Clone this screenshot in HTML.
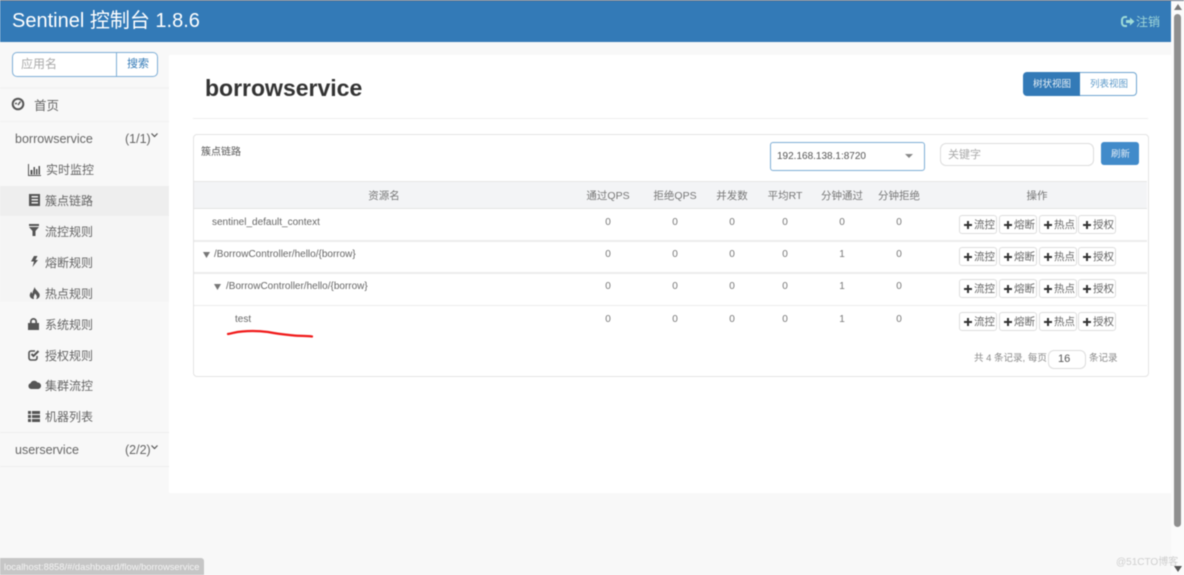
<!DOCTYPE html>
<html lang="zh"><head><meta charset="utf-8"><title>Sentinel</title>
<style>
html,body{margin:0;padding:0;width:1184px;height:575px;overflow:hidden;background:#f8f8f8}
body{position:relative;font-family:"Liberation Sans","Noto Sans CJK SC",sans-serif;color:#555;filter:blur(.45px)}
div,span,svg{position:absolute}
.t{white-space:nowrap;line-height:14px}
.c{transform:translateX(-50%)}
.m{font-size:12px;color:#666}
.h{font-size:10.5px;color:#777}
.v{font-size:10px;color:#777}
.r{font-size:10px;color:#666}
.l{left:194px;width:953px;height:1px;background:#ececec}
.b{width:36px;height:17px;border:1px solid #ddd;border-radius:3px;background:#fff;font-size:10.5px;line-height:17px;color:#666;white-space:nowrap}
.b i{position:absolute;left:4px;top:5px;width:8px;height:8px;background:linear-gradient(#333,#333) 0 3px/8px 2px no-repeat,linear-gradient(#333,#333) 3px 0/2px 8px no-repeat}
.b em{position:absolute;left:14px;top:1px;font-style:normal}
.ic{fill:#555}
</style></head><body>
<div style="left:0;top:0;width:1171px;height:42px;background:#337ab7"></div>
<div style="left:0;top:0;width:1184px;height:1px;background:#6a7484"></div>
<span class="t" style="left:12px;top:9px;font-size:20px;line-height:24px;color:#fff">Sentinel 控制台 1.8.6</span>
<svg style="left:1121px;top:15px" width="14" height="13" viewBox="0 0 14 13"><path d="M6 2H4a3 3 0 0 0-3 3v3a3 3 0 0 0 3 3h2" fill="none" stroke="#9fdcd8" stroke-width="2"/><path d="M5 5h4V2.500L13.500 6.500 9 10.500V8H5z" fill="#9fdcd8"/></svg>
<span class="t" style="left:1136px;top:15px;font-size:12px;color:#9fd6d8">注销</span>

<div style="left:1171px;top:1px;width:13px;height:574px;background:#fbfbfb"></div>
<div style="left:1174px;top:14px;width:7px;height:513px;background:#8f8f8f;border-radius:4px"></div>
<svg style="left:1174px;top:4px" width="8" height="6"><path d="M4 0L8 6H0z" fill="#7a7a7a"/></svg>
<svg style="left:1174px;top:566px" width="8" height="6"><path d="M0 0H8L4 6z" fill="#555"/></svg>

<div style="left:0;top:186px;width:169px;height:30px;background:#eee"></div>
<div style="left:0;top:216px;width:169px;height:86px;background:#f5f5f5"></div>
<div style="left:0;top:87px;width:169px;height:2px;background:#f3f3f3"></div>
<div style="left:0;top:121px;width:169px;height:1px;background:#f1f1f1"></div>
<div style="left:0;top:432px;width:169px;height:1px;background:#eee"></div>
<div style="left:0;top:466px;width:169px;height:1px;background:#eee"></div>

<div style="left:12px;top:52px;width:104px;height:23px;background:#fff;border:1px solid #7eaed6;border-radius:5px 0 0 5px"></div>
<span class="t" style="left:21px;top:57px;font-size:12px;color:#aaa">应用名</span>
<div style="left:116px;top:52px;width:40px;height:23px;background:#fff;border:1px solid #7eaed6;border-radius:0 5px 5px 0"></div>
<span class="t" style="left:127px;top:57px;font-size:11px;color:#337ab7">搜索</span>

<svg style="left:11px;top:97px" width="14" height="14" viewBox="0 0 14 14"><circle cx="7" cy="7" r="5.300" fill="none" stroke="#555" stroke-width="2"/><path d="M4 6.500h2M7 8L9.500 4.500" stroke="#555" stroke-width="1.500"/></svg>
<span class="t" style="left:34px;top:99px;font-size:12.500px;color:#666">首页</span>
<span class="t" style="left:15px;top:132px;font-size:12.500px;color:#666">borrowservice</span>
<span class="t" style="left:125px;top:132px;font-size:12.500px;color:#666">(1/1)</span>
<svg style="left:151px;top:133px" width="7" height="5"><path d="M.5.500L3.500 3.500 6.500.500" fill="none" stroke="#555" stroke-width="1.200"/></svg>

<svg style="left:28px;top:164px" width="13" height="12" viewBox="0 0 13 12"><path class="ic" d="M0 0h1v11h12v1H0zM2.500 6h2v4.500h-2zM5.500 3h1.500v7.500H5.500zM8 5h1.500v5.500H8zM10.500 2H12v8.500h-1.500z"/></svg>
<span class="t m" style="left:46px;top:163px">实时监控</span>
<svg style="left:29px;top:194px" width="11" height="12" viewBox="0 0 11 12"><path class="ic" fill-rule="evenodd" d="M0 0h11v12H0zM2.500 2v1.500h6.500V2zM2.500 5v1.500h6.500V5zM2.500 8v1.500h6.500V8z"/></svg>
<span class="t m" style="left:45px;top:194px">簇点链路</span>
<svg style="left:29px;top:224px" width="10" height="12" viewBox="0 0 10 12"><path class="ic" d="M0 0h10v2H0zM0 3h10L6.500 7v5h-3V7z"/></svg>
<span class="t m" style="left:45px;top:225px">流控规则</span>
<svg style="left:31px;top:256px" width="7" height="11" viewBox="0 0 7 11"><path class="ic" d="M3 0h3.500L4.500 4H7L1.500 11 3 5.500H0z"/></svg>
<span class="t m" style="left:45px;top:256px">熔断规则</span>
<svg style="left:29px;top:287px" width="11" height="12" viewBox="0 0 11 12"><path class="ic" d="M5.500 0C6.500 3 9 4 10.500 7c.800 2.500-1 5-3.500 5 1.500-1.500 1-3.500-1-5.500C5.500 8.500 4 9.500 5 12 2 12 0 9.500 1 7c.300-1 1-1.800 1.500-2.500 0 1 .3 1.700 1 2C3.500 4 5 2.500 5.500 0z"/></svg>
<span class="t m" style="left:45px;top:287px">热点规则</span>
<svg style="left:28px;top:318px" width="11" height="12" viewBox="0 0 11 12"><path class="ic" fill-rule="evenodd" d="M2 5V3.500a3.500 3.500 0 0 1 7 0V5h2v7H0V5zM3.700 5h3.600V3.500a1.800 1.800 0 0 0-3.600 0z"/></svg>
<span class="t m" style="left:45px;top:318px">系统规则</span>
<svg style="left:28px;top:349px" width="12" height="12" viewBox="0 0 12 12"><path d="M9 7v2a2 2 0 0 1-2 2H3a2 2 0 0 1-2-2V4a2 2 0 0 1 2-2h4" fill="none" stroke="#555" stroke-width="1.600"/><path d="M3.500 5L5.500 7 10.500 2" fill="none" stroke="#555" stroke-width="2"/></svg>
<span class="t m" style="left:45px;top:349px">授权规则</span>
<svg style="left:28px;top:380px" width="13" height="9" viewBox="0 0 13 9"><path class="ic" d="M3 9a3 3 0 0 1-.5-5.800A4 4 0 0 1 9.500 2.500 3.300 3.300 0 0 1 10.500 9z"/></svg>
<span class="t m" style="left:45px;top:379px">集群流控</span>
<svg style="left:28px;top:411px" width="12" height="11" viewBox="0 0 12 11"><path class="ic" d="M0 0h3v3H0zM4 0h8v3H4zM0 4h3v3H0zM4 4h8v3H4zM0 8h3v3H0zM4 8h8v3H4z"/></svg>
<span class="t m" style="left:45px;top:410px">机器列表</span>
<span class="t" style="left:15px;top:443px;font-size:12.500px;color:#666">userservice</span>
<span class="t" style="left:125px;top:443px;font-size:12.500px;color:#666">(2/2)</span>
<svg style="left:151px;top:445px" width="7" height="5"><path d="M.5.500L3.500 3.500 6.500.500" fill="none" stroke="#555" stroke-width="1.200"/></svg>

<div style="left:169px;top:55px;width:1002px;height:438px;background:#fff"></div>
<span class="t" style="left:205px;top:74px;font-size:23px;line-height:28px;font-weight:bold;color:#333">borrowservice</span>
<div style="left:193px;top:118px;width:955px;height:1px;background:#eee"></div>

<div style="left:1023px;top:72px;width:57px;height:24px;background:#337ab7;border-radius:4px 0 0 4px"></div>
<div style="left:1080px;top:72px;width:56px;height:22px;background:#fff;border:1px solid #6fa5d0;border-left:0;border-radius:0 4px 4px 0"></div>
<span class="t" style="left:1033px;top:78px;font-size:9.500px;color:#e6eff6">树状视图</span>
<span class="t" style="left:1090px;top:78px;font-size:9.500px;color:#5f9bca">列表视图</span>

<div style="left:193px;top:134px;width:954px;height:241px;border:1px solid #e3e3e3;border-radius:4px;background:#fff"></div>
<span class="t" style="left:201px;top:145px;font-size:10px;line-height:15px;color:#555">簇点链路</span>
<div style="left:770px;top:142px;width:153px;height:27px;border:1px solid #7eaed6;border-radius:3px;background:#fff"></div>
<span class="t" style="left:777px;top:150px;font-size:10px;color:#555">192.168.138.1:8720</span>
<svg style="left:905px;top:154px" width="8" height="4"><path d="M0 0H8L4 4z" fill="#888"/></svg>
<div style="left:940px;top:143px;width:152px;height:21px;border:1px solid #ddd;border-radius:6px;background:#fff"></div>
<span class="t" style="left:948px;top:148px;font-size:11px;color:#aaa">关键字</span>
<div style="left:1101px;top:142px;width:38px;height:23px;background:#428bca;border-radius:3px"></div>
<span class="t" style="left:1111px;top:148px;font-size:9.500px;color:#dfeaf4">刷新</span>

<div style="left:194px;top:181px;width:953px;background:#f3f4f6;border-top:1px solid #e6e6e6;border-bottom:1px solid #e4e4e4;box-sizing:border-box;height:28px"></div>
<span class="t h c" style="left:384px;top:189px">资源名</span>
<span class="t h c" style="left:608px;top:189px">通过QPS</span>
<span class="t h c" style="left:675px;top:189px">拒绝QPS</span>
<span class="t h c" style="left:732px;top:189px">并发数</span>
<span class="t h c" style="left:785px;top:189px">平均RT</span>
<span class="t h c" style="left:842px;top:189px">分钟通过</span>
<span class="t h c" style="left:899px;top:189px">分钟拒绝</span>
<span class="t h c" style="left:1037px;top:189px">操作</span>

<div class="l" style="top:240px;height:2px"></div>
<div class="l" style="top:272px;height:2px"></div>
<div class="l" style="top:305px"></div>

<span class="t r" style="left:212px;top:216px">sentinel_default_context</span>
<svg style="left:203px;top:252px" width="7" height="6"><path d="M0 0H7L3.500 6z" fill="#777"/></svg>
<span class="t r" style="left:214px;top:248px">/BorrowController/hello/{borrow}</span>
<svg style="left:214px;top:284px" width="7" height="6"><path d="M0 0H7L3.500 6z" fill="#777"/></svg>
<span class="t r" style="left:226px;top:280px">/BorrowController/hello/{borrow}</span>
<span class="t r" style="left:235px;top:313px">test</span>
<svg style="left:226px;top:326px" width="90" height="12"><path d="M2 8C6 7.500 9 6 16 5.500 24 4.800 34 5 42 6 52 8 58 8.500 68 9.500 74 10 80 9.800 86 10.500" fill="none" stroke="#f01a1a" stroke-width="2.200" stroke-linecap="round"/></svg>

<span class="t v c" style="left:608px;top:216px">0</span><span class="t v c" style="left:675px;top:216px">0</span><span class="t v c" style="left:732px;top:216px">0</span><span class="t v c" style="left:785px;top:216px">0</span><span class="t v c" style="left:842px;top:216px">0</span><span class="t v c" style="left:899px;top:216px">0</span>
<span class="t v c" style="left:608px;top:248px">0</span><span class="t v c" style="left:675px;top:248px">0</span><span class="t v c" style="left:732px;top:248px">0</span><span class="t v c" style="left:785px;top:248px">0</span><span class="t v c" style="left:842px;top:248px">1</span><span class="t v c" style="left:899px;top:248px">0</span>
<span class="t v c" style="left:608px;top:280px">0</span><span class="t v c" style="left:675px;top:280px">0</span><span class="t v c" style="left:732px;top:280px">0</span><span class="t v c" style="left:785px;top:280px">0</span><span class="t v c" style="left:842px;top:280px">1</span><span class="t v c" style="left:899px;top:280px">0</span>
<span class="t v c" style="left:608px;top:313px">0</span><span class="t v c" style="left:675px;top:313px">0</span><span class="t v c" style="left:732px;top:313px">0</span><span class="t v c" style="left:785px;top:313px">0</span><span class="t v c" style="left:842px;top:313px">1</span><span class="t v c" style="left:899px;top:313px">0</span>

<div class="b" style="left:959px;top:215px"><i></i><em>流控</em></div><div class="b" style="left:999px;top:215px"><i></i><em>熔断</em></div><div class="b" style="left:1039px;top:215px"><i></i><em>热点</em></div><div class="b" style="left:1078px;top:215px"><i></i><em>授权</em></div>
<div class="b" style="left:959px;top:247px"><i></i><em>流控</em></div><div class="b" style="left:999px;top:247px"><i></i><em>熔断</em></div><div class="b" style="left:1039px;top:247px"><i></i><em>热点</em></div><div class="b" style="left:1078px;top:247px"><i></i><em>授权</em></div>
<div class="b" style="left:959px;top:279px"><i></i><em>流控</em></div><div class="b" style="left:999px;top:279px"><i></i><em>熔断</em></div><div class="b" style="left:1039px;top:279px"><i></i><em>热点</em></div><div class="b" style="left:1078px;top:279px"><i></i><em>授权</em></div>
<div class="b" style="left:959px;top:312px"><i></i><em>流控</em></div><div class="b" style="left:999px;top:312px"><i></i><em>熔断</em></div><div class="b" style="left:1039px;top:312px"><i></i><em>热点</em></div><div class="b" style="left:1078px;top:312px"><i></i><em>授权</em></div>

<span class="t" style="left:974px;top:352px;font-size:9.500px;color:#888">共 4 条记录, 每页</span>
<div style="left:1048px;top:350px;width:36px;height:17px;border:1px solid #ddd;border-radius:6px;background:#fff"></div>
<span class="t" style="left:1058px;top:352px;font-size:11px;color:#555">16</span>
<span class="t" style="left:1089px;top:352px;font-size:9.500px;color:#888">条记录</span>

<div style="left:0;top:558px;width:204px;height:17px;background:#c6c6c6;border-radius:0 3px 0 0"></div>
<span class="t" style="left:4px;top:560px;font-size:9.400px;color:#f4f4f4">localhost:8858/#/dashboard/flow/borrowservice</span>
<span class="t" style="left:1116px;top:556px;font-size:10px;color:#cfcfcf">@51CTO博客</span>
</body></html>
